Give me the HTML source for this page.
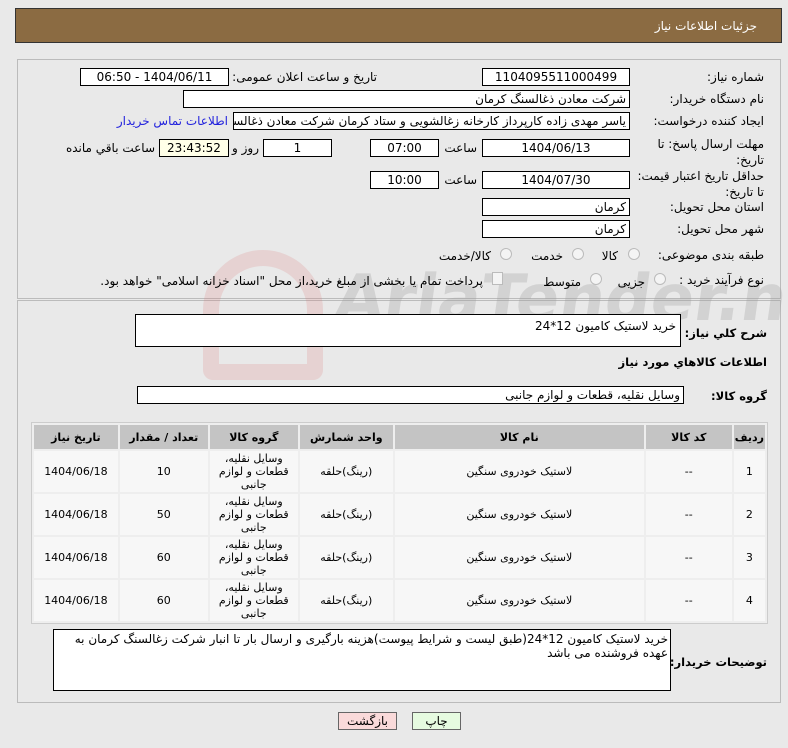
<!DOCTYPE html>
<html><head><meta charset="utf-8"><style>
body{margin:0;width:788px;height:748px;background:#e9e9e9;font-family:"DejaVu Sans","Liberation Sans",sans-serif;font-size:12px;color:#000;position:relative;overflow:hidden}
.a{position:absolute;white-space:nowrap}
.hdr{left:15px;top:8px;width:767px;height:35px;background:#8b6b42;border:1px solid #333;box-sizing:border-box}
.hdr span{position:absolute;right:24px;top:10px;color:#fff;font-size:12px}
.panel{border:1px solid #bbb;box-sizing:border-box}
.box{position:absolute;background:#fff;border:1px solid #000;box-sizing:border-box;direction:rtl;text-align:center;line-height:17px;overflow:hidden;white-space:nowrap;font-size:12px}
.l{position:absolute;direction:rtl;text-align:right;white-space:nowrap}
.b{font-weight:bold;font-size:11.5px}
.r{text-align:right;padding-right:3px}
table{border-collapse:separate;border-spacing:2px;position:absolute;left:31px;top:422px;width:737px;background:#eee;border:1px solid #ccc;direction:rtl;font-size:11px}
th{background:#c4c4c4;height:22px;font-weight:bold}
td{background:#f7f7f7;height:39px;text-align:center;line-height:13px}
.radio{position:absolute;width:10px;height:10px;border:1px solid #bbb;border-radius:50%;background:#f4f4f4}
.btn{position:absolute;border:1px solid #666;box-sizing:border-box;text-align:center;line-height:16px;font-size:12px}
</style></head><body>
<div class="a hdr"><span>جزئیات اطلاعات نیاز</span></div>
<div class="a panel" style="left:17px;top:59px;width:764px;height:240px"></div>
<div class="a panel" style="left:17px;top:300px;width:764px;height:403px"></div>
<div class="a" style="left:203px;top:250px;width:120px;height:130px;border:16px solid rgba(220,120,120,0.2);border-radius:60px 60px 10px 10px;box-sizing:border-box"></div>
<div class="a" style="left:335px;top:262px;font-size:64px;font-weight:bold;color:rgba(160,160,160,0.3);transform:skewX(-8deg)">AriaTender.net</div>

<div class="l" style="right:24px;top:70px">شماره نیاز:</div>
<div class="box" style="left:482px;top:68px;width:148px;height:18px">1104095511000499</div>
<div class="l" style="right:411px;top:70px">تاریخ و ساعت اعلان عمومی:</div>
<div class="box" style="left:80px;top:68px;width:149px;height:18px">1404/06/11 - 06:50</div>

<div class="l" style="right:24px;top:92px">نام دستگاه خریدار:</div>
<div class="box r" style="left:183px;top:90px;width:447px;height:18px">شرکت معادن ذغالسنگ کرمان</div>

<div class="l" style="right:24px;top:114px">ایجاد کننده درخواست:</div>
<div class="box r" style="left:233px;top:112px;width:397px;height:18px">یاسر مهدی زاده کارپرداز کارخانه زغالشویی و ستاد کرمان شرکت معادن ذغالسنگ</div>
<div class="l" style="right:560px;top:114px;color:#2222dd">اطلاعات تماس خریدار</div>

<div class="l" style="right:24px;top:136px;line-height:16px">مهلت ارسال پاسخ: تا<br>تاریخ:</div>
<div class="box" style="left:482px;top:139px;width:148px;height:18px">1404/06/13</div>
<div class="l" style="right:311px;top:141px">ساعت</div>
<div class="box" style="left:370px;top:139px;width:69px;height:18px">07:00</div>
<div class="box" style="left:263px;top:139px;width:69px;height:18px">1</div>
<div class="l" style="right:529px;top:141px">روز و</div>
<div class="box" style="left:159px;top:139px;width:70px;height:18px;background:#ffffe8">23:43:52</div>
<div class="l" style="right:633px;top:141px">ساعت باقي مانده</div>

<div class="l" style="right:24px;top:168px;line-height:16px">حداقل تاریخ اعتبار قیمت:<br>تا تاریخ:</div>
<div class="box" style="left:482px;top:171px;width:148px;height:18px">1404/07/30</div>
<div class="l" style="right:311px;top:173px">ساعت</div>
<div class="box" style="left:370px;top:171px;width:69px;height:18px">10:00</div>

<div class="l" style="right:24px;top:200px">استان محل تحویل:</div>
<div class="box r" style="left:482px;top:198px;width:148px;height:18px">کرمان</div>
<div class="l" style="right:24px;top:222px">شهر محل تحویل:</div>
<div class="box r" style="left:482px;top:220px;width:148px;height:18px">کرمان</div>

<div class="l" style="right:24px;top:248px">طبقه بندی موضوعی:</div>
<div class="radio" style="left:628px;top:248px"></div><div class="l" style="right:170px;top:249px">کالا</div>
<div class="radio" style="left:572px;top:248px"></div><div class="l" style="right:225px;top:249px">خدمت</div>
<div class="radio" style="left:500px;top:248px"></div><div class="l" style="right:297px;top:249px">کالا/خدمت</div>

<div class="l" style="right:24px;top:273px">نوع فرآیند خرید :</div>
<div class="radio" style="left:654px;top:273px"></div><div class="l" style="right:143px;top:275px">جزیی</div>
<div class="radio" style="left:590px;top:273px"></div><div class="l" style="right:207px;top:275px">متوسط</div>
<div class="a" style="left:492px;top:272px;width:9px;height:11px;border:1px solid #bbb;background:#f4f4f4"></div>
<div class="l" style="right:305px;top:274px">پرداخت تمام یا بخشی از مبلغ خرید،از محل "اسناد خزانه اسلامی" خواهد بود.</div>

<div class="l b" style="right:21px;top:326px">شرح کلي نیاز:</div>
<div class="box" style="left:135px;top:314px;width:546px;height:33px;text-align:right;padding-right:4px;line-height:22px">خرید لاستیک کامیون 12*24</div>
<div class="l b" style="right:21px;top:355px">اطلاعات کالاهاي مورد نیاز</div>
<div class="l b" style="right:21px;top:389px">گروه کالا:</div>
<div class="box r" style="left:137px;top:386px;width:547px;height:18px">وسایل نقلیه، قطعات و لوازم جانبی</div>

<table>
<tr><th style="width:25px">ردیف</th><th style="width:84px">کد کالا</th><th style="width:247px">نام کالا</th><th style="width:91px">واحد شمارش</th><th style="width:86px">گروه کالا</th><th style="width:86px">تعداد / مقدار</th><th>تاریخ نیاز</th></tr>
<tr><td>1</td><td>--</td><td>لاستیک خودروی سنگین</td><td>(رینگ)حلقه</td><td>وسایل نقلیه،<br>قطعات و لوازم<br>جانبی</td><td>10</td><td>1404/06/18</td></tr>
<tr><td>2</td><td>--</td><td>لاستیک خودروی سنگین</td><td>(رینگ)حلقه</td><td>وسایل نقلیه،<br>قطعات و لوازم<br>جانبی</td><td>50</td><td>1404/06/18</td></tr>
<tr><td>3</td><td>--</td><td>لاستیک خودروی سنگین</td><td>(رینگ)حلقه</td><td>وسایل نقلیه،<br>قطعات و لوازم<br>جانبی</td><td>60</td><td>1404/06/18</td></tr>
<tr><td>4</td><td>--</td><td>لاستیک خودروی سنگین</td><td>(رینگ)حلقه</td><td>وسایل نقلیه،<br>قطعات و لوازم<br>جانبی</td><td>60</td><td>1404/06/18</td></tr>
</table>

<div class="l b" style="right:21px;top:655px">توضیحات خریدار:</div>
<div class="box" style="left:53px;top:629px;width:618px;height:62px;text-align:right;padding-right:2px;white-space:normal;line-height:14px;padding-top:2px">خرید لاستیک کامیون 12*24(طبق لیست و شرایط پیوست)هزینه  بارگیری و ارسال بار تا انبار شرکت زغالسنگ کرمان به عهده فروشنده می باشد</div>

<div class="btn" style="left:338px;top:712px;width:59px;height:18px;background:#fadada">بازگشت</div>
<div class="btn" style="left:412px;top:712px;width:49px;height:18px;background:#e6fbe0">چاپ</div>
</body></html>
